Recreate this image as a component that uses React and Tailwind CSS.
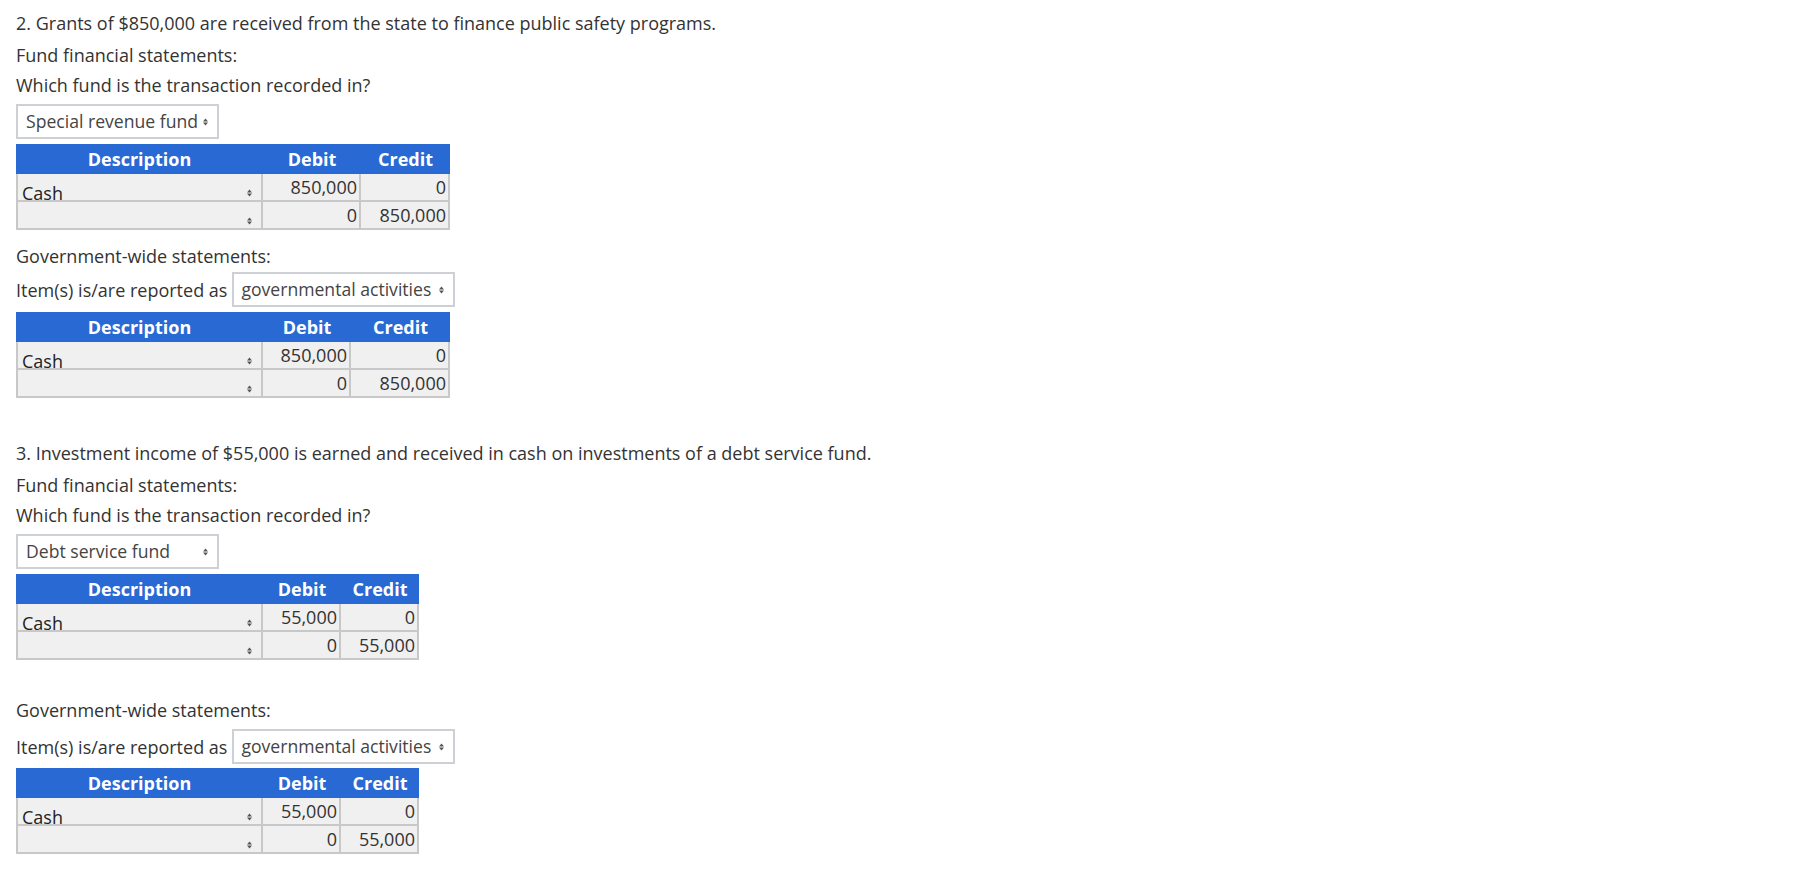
import React from "react";

const BLUE = "bg-[#2869d3]";

export default function App() {
  return (
    <div className="min-h-screen w-full bg-white pl-[16px] pt-[8px] font-['Open_Sans',sans-serif] text-[18px] text-[#333]">
      {/* transaction 2 */}
      <Line>
        2. Grants of $850,000 are received from the state to finance public safety programs.
      </Line>
      <Line className="mt-[2px]">Fund financial statements:</Line>
      <Line>Which fund is the transaction recorded in?</Line>
      <Select className="mt-[4px]" width="w-[203px]" label="Special revenue fund" />
      <Ledger className="mt-[5px]" widths={["w-[247px]", "w-[98px]", "w-[89px]"]} amount="850,000" />

      <Line className="mt-[11px]">Government-wide statements:</Line>
      <ReportedAs className="mt-[1px]" />
      <Ledger className="mt-[5px]" widths={["w-[247px]", "w-[88px]", "w-[99px]"]} amount="850,000" />

      {/* transaction 3 */}
      <Line className="mt-[40px]">
        3. Investment income of $55,000 is earned and received in cash on investments of a debt service fund.
      </Line>
      <Line className="mt-[2px]">Fund financial statements:</Line>
      <Line>Which fund is the transaction recorded in?</Line>
      <Select className="mt-[4px]" width="w-[203px]" label="Debt service fund" />
      <Ledger className="mt-[5px]" widths={["w-[247px]", "w-[78px]", "w-[78px]"]} amount="55,000" />

      <Line className="mt-[35px]">Government-wide statements:</Line>
      <ReportedAs className="mt-[4px]" />
      <Ledger className="mt-[4px]" widths={["w-[247px]", "w-[78px]", "w-[78px]"]} amount="55,000" />
    </div>
  );
}

/* ---------- bits ---------- */

function Line({ children, className = "" }) {
  return <div className={`h-[30px] leading-[30px] whitespace-nowrap ${className}`}>{children}</div>;
}

function Arrows({ className = "" }) {
  return (
    <svg width="5" height="8" viewBox="0 0 5 8" className={className}>
      <polygon points="0,3.4 2.5,0.4 5,3.4" fill="#555" />
      <polygon points="0,4.6 5,4.6 2.5,7.6" fill="#555" />
    </svg>
  );
}

function Select({ label, width, className = "" }) {
  return (
    <div
      className={`flex h-[35px] ${width} items-start justify-between border-2 border-[#cdd1d6] bg-white pl-[8px] pr-[9px] ${className}`}
    >
      <span className="text-[17.6px] leading-[31px] text-[#444] whitespace-nowrap">{label}</span>
      <Arrows className="mt-[12px] shrink-0" />
    </div>
  );
}

function ReportedAs({ className = "" }) {
  return (
    <div className={`flex h-[35px] items-center ${className}`}>
      <span className="mr-[5px] leading-[30px] whitespace-nowrap">Item(s) is/are reported as</span>
      <div className="flex h-[35px] w-[223px] items-start justify-between border-2 border-[#cdd1d6] bg-white pl-[7px] pr-[9px]">
        <span className="text-[17.6px] leading-[31px] text-[#444] whitespace-nowrap">governmental activities</span>
        <Arrows className="mt-[12px] shrink-0" />
      </div>
    </div>
  );
}

function Ledger({ widths, amount, className = "" }) {
  const [wDesc, wDr, wCr] = widths;
  return (
    <div className={`w-fit ${className}`}>
      <div className={`flex h-[30px] ${BLUE} font-bold text-white leading-[30px]`}>
        <div className={`${wDesc} text-center`}>Description</div>
        <div className={`${wDr} text-center`}>Debit</div>
        <div className={`${wCr} text-center`}>Credit</div>
      </div>
      <Row widths={widths} desc="Cash" debit={amount} credit="0" />
      <Row widths={widths} desc="" debit="0" credit={amount} />
    </div>
  );
}

function Row({ widths, desc, debit, credit }) {
  const [wDesc, wDr, wCr] = widths;
  return (
    <div className="flex h-[28px]">
      <div
        className={`relative ${wDesc} overflow-hidden border-b-2 border-l-2 border-r-2 border-[#c8c8c8] bg-[#f0f0f0]`}
      >
        <span className="block pl-[4px] pt-[10px] leading-[18px] text-[#222]">{desc}</span>
        <Arrows className="absolute right-[9px] top-[15px]" />
      </div>
      <div className={`${wDr} border-b-2 border-r-2 border-[#c8c8c8] bg-[#f0f0f0] pr-[2px] text-right leading-[26px]`}>
        {debit}
      </div>
      <div className={`${wCr} border-b-2 border-r-2 border-[#c8c8c8] bg-[#f0f0f0] pr-[2px] text-right leading-[26px]`}>
        {credit}
      </div>
    </div>
  );
}
